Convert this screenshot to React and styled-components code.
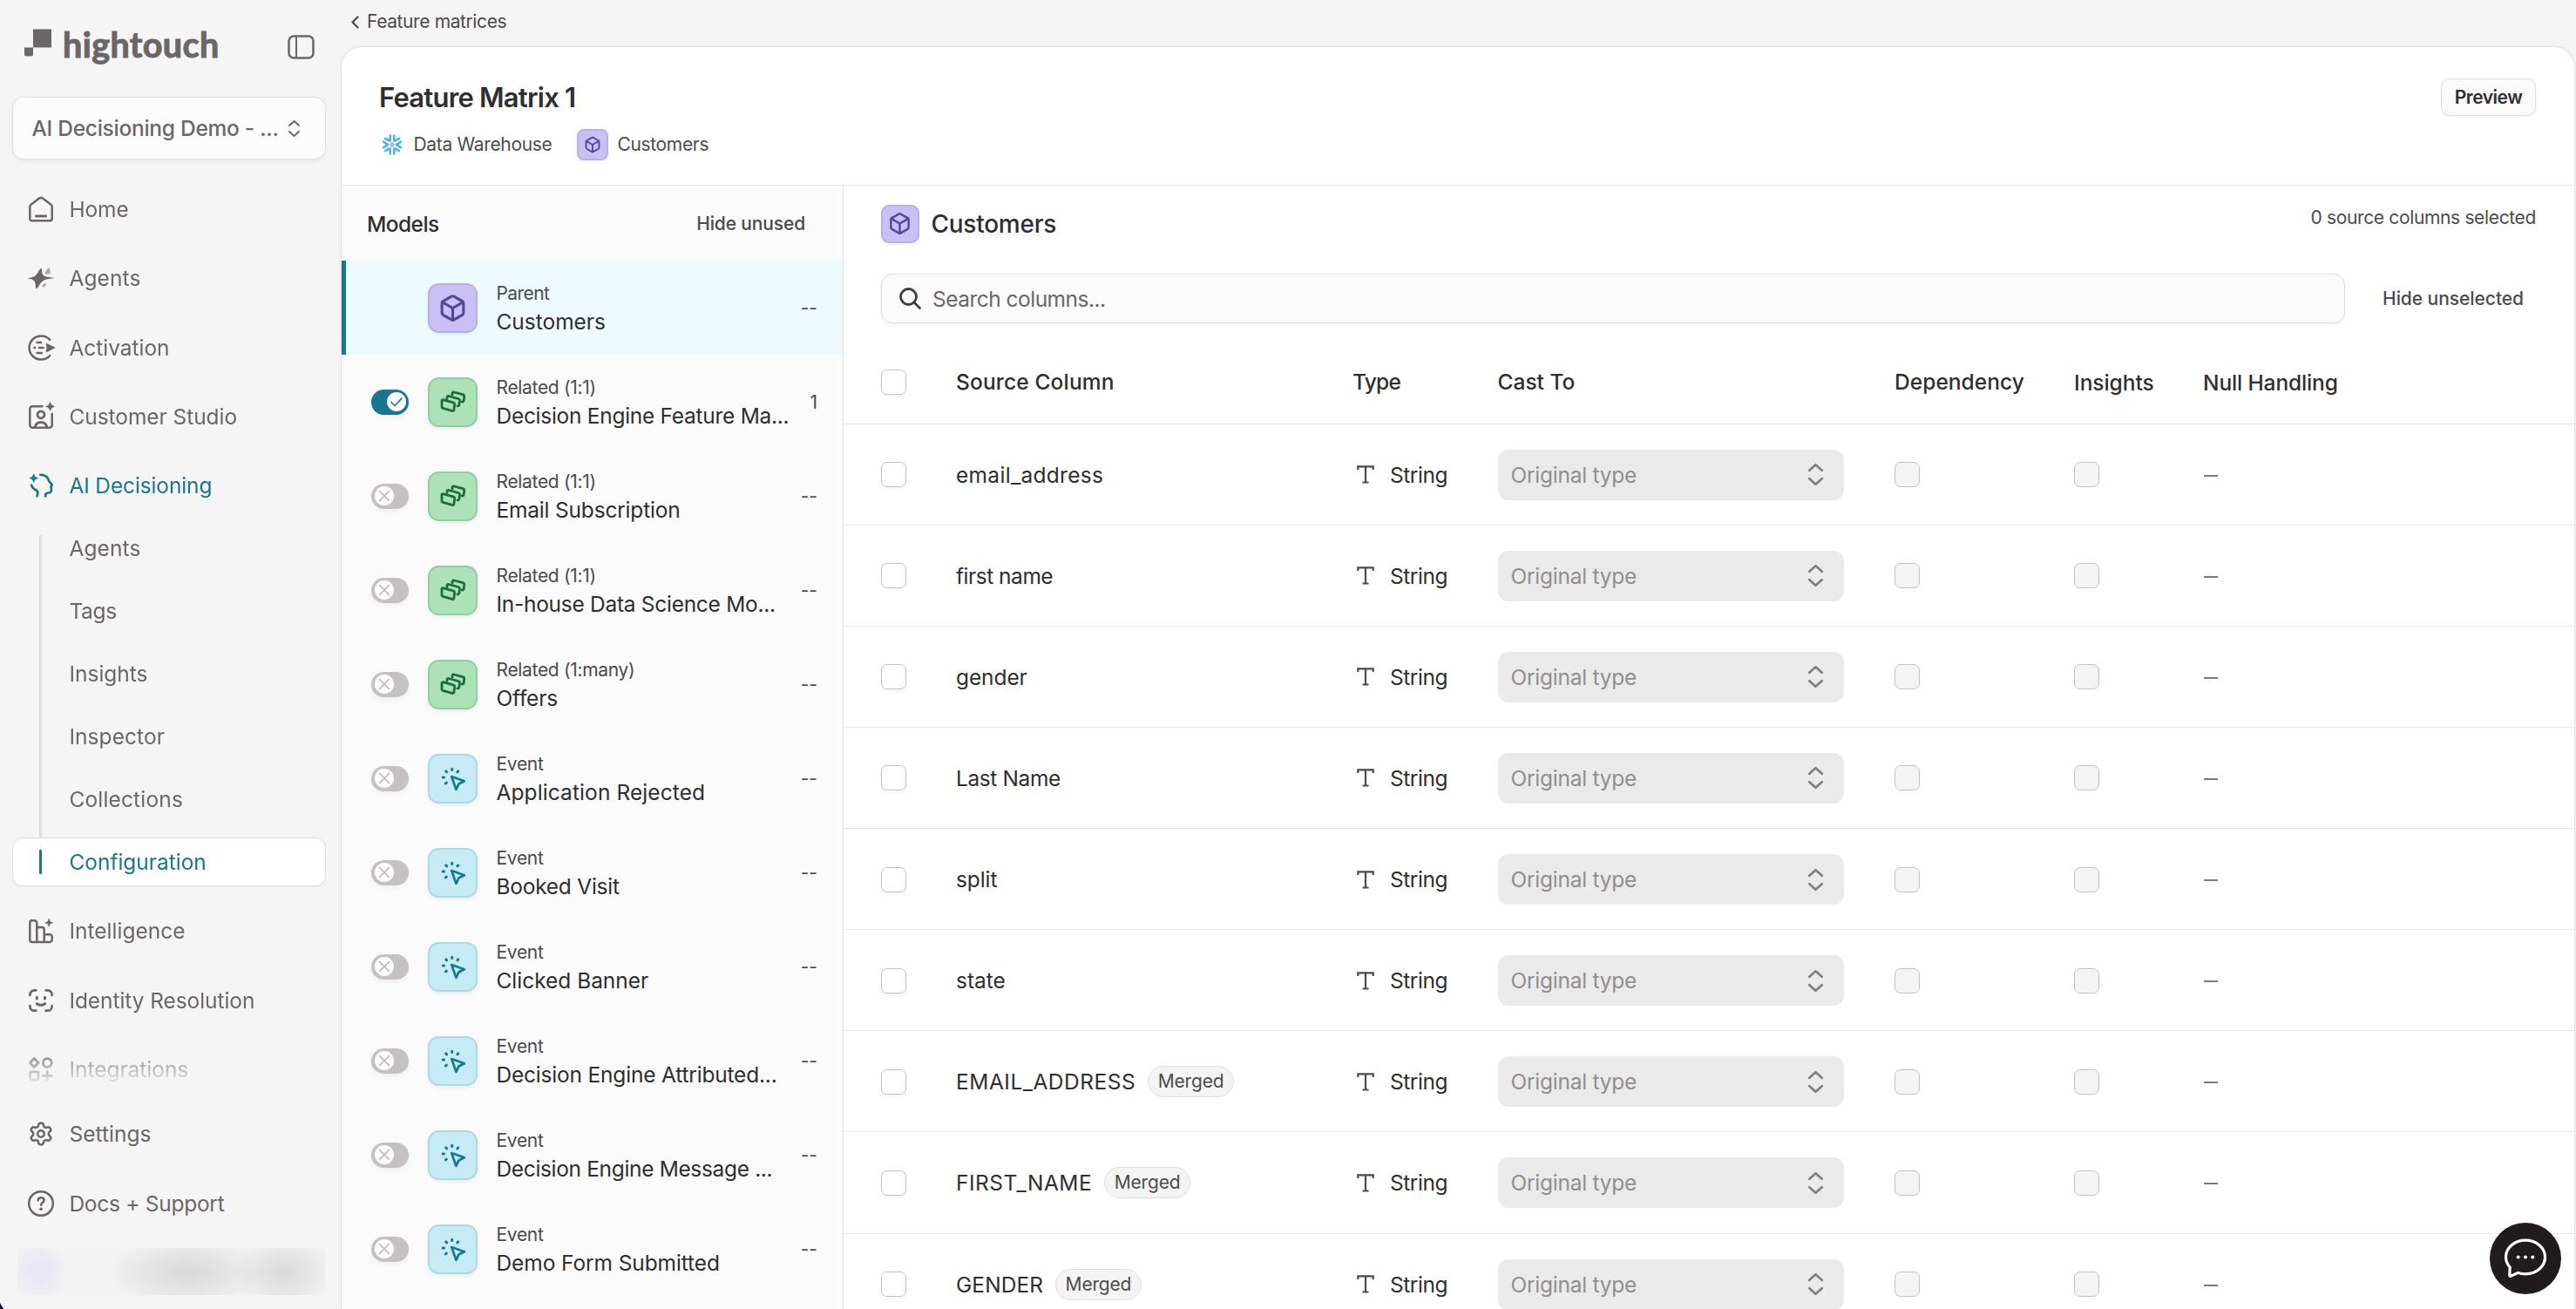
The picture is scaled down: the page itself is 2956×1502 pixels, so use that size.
import React from "react";
import styled, { createGlobalStyle, css } from "styled-components";
import { Box, Settings } from "lucide-react";

const c = {
  page: "#f5f5f5",
  nav: "#6b6667",
  ink: "#2f2e30",
  body: "#4c4a4b",
  line: "#e6e6e6",
  teal: "#19768e",
};

const Global = createGlobalStyle`
  *, *::before, *::after { box-sizing: border-box; }
  body { margin: 0; background: ${c.page}; font-family: Inter, "Liberation Sans", sans-serif; color: ${c.ink}; }
`;

const Text = styled.span`
  font-size: ${(p) => p.$size || 24.5}px;
  font-weight: ${(p) => p.$weight || 400};
  letter-spacing: ${(p) => p.$track || 0}em;
  line-height: ${(p) => p.$lh || 30}px;
  color: ${(p) => p.$color || c.ink};
  white-space: nowrap;
`;

const Shell = styled.div`
  position: relative;
  display: grid;
  grid-template-columns: 391px 1fr;
  height: 1502px;
  overflow: hidden;
  background: ${c.page};
`;

/* ---------- Sidebar ---------- */

const Sidebar = styled.aside`
  display: flex;
  flex-direction: column;
  height: 1502px;
  padding: 0 17px 0 14px;
`;

const Brand = styled.div`
  display: flex;
  align-items: flex-start;
  justify-content: space-between;
  height: 111px;
  padding: 28px 13px 0 14px;
`;

const Wordmark = styled.div`
  display: flex;
  gap: 13px;
  svg { margin-top: 5px; }
`;

const BrandName = styled.span`
  font-family: Lato, sans-serif;
  font-weight: 700;
  font-size: 39.5px;
  line-height: 45px;
  letter-spacing: 0.0104em;
  color: ${c.nav};
  -webkit-text-stroke: 1px ${c.nav};
`;

const CollapseButton = styled.div`
  margin-top: 12px;
  height: 30px;
`;

const Workspace = styled.div`
  display: flex;
  align-items: center;
  justify-content: space-between;
  height: 72px;
  padding: 0 29px 0 21.5px;
  background: #fcfcfc;
  border: 1px solid #e0dfe0;
  border-radius: 13px;
  box-shadow: 0 2px 4px rgba(0, 0, 0, 0.05);
`;

const Nav = styled.nav`
  display: flex;
  flex-direction: column;
  gap: 7.3px;
  height: 1061px;
  margin-top: 21px;
  overflow: hidden;
  mask-image: linear-gradient(to bottom, #000 991px, transparent 1045px);
`;

const FootNav = styled.div`
  display: flex;
  flex-direction: column;
  gap: 8.3px;
`;

const NavItem = styled.div`
  display: flex;
  flex: none;
  align-items: center;
  gap: 17.4px;
  height: 72px;
  padding-left: 18px;
  color: ${(p) => (p.$active ? c.teal : c.nav)};
`;

const SubNav = styled.div`
  display: flex;
  flex: none;
  flex-direction: column;
  margin-top: -7.3px;
`;

const SubItem = styled.div`
  display: flex;
  align-items: center;
  gap: 31.4px;
  height: 72px;
  padding-left: 31px;
  ${(p) =>
    p.$active &&
    css`
      height: 56px;
      margin: 8px 0;
      padding-left: 30px;
      background: #fff;
      border: 1px solid #e0dfe0;
      border-radius: 12px;
      box-shadow: 0 1px 2px rgba(0, 0, 0, 0.05);
    `}
`;

const Rail = styled.i`
  align-self: stretch;
  width: 3px;
  background: #dedede;
  ${(p) => p.$first && css`margin-top: 21px;`}
  ${(p) => p.$last && css`margin-bottom: -8px;`}
  ${(p) =>
    p.$active &&
    css`
      margin: 13px 0;
      background: ${c.teal};
      border-radius: 1px;
    `}
`;

const BlurredAccount = styled.div`
  width: 354px;
  height: 54px;
  margin: 15px 0 0 6px;
  background:
    radial-gradient(ellipse 34px 38px at 25px 26px, #e8e6f6 20%, rgba(232, 230, 246, 0) 100%),
    radial-gradient(ellipse 90px 44px at 195px 28px, #d8d8d8, rgba(217, 217, 217, 0) 100%),
    radial-gradient(ellipse 58px 44px at 305px 28px, #d9d9d9, rgba(218, 218, 218, 0) 100%),
    #f2f2f2;
`;

/* ---------- Main card ---------- */

const Main = styled.main`
  display: flex;
  flex-direction: column;
  height: 1502px;
  padding-right: 1px;
`;

const Breadcrumb = styled.div`
  display: flex;
  align-items: center;
  gap: 9px;
  height: 53px;
  padding: 0 0 3px 12px;
`;

const Card = styled.section`
  display: flex;
  flex: 1;
  flex-direction: column;
  min-height: 0;
  background: #fff;
  border: 1px solid #e3e3e3;
  border-bottom: 0;
  border-radius: 24px 24px 0 0;
  box-shadow: 0 0 4px rgba(0, 0, 0, 0.04);
  overflow: hidden;
`;

const CardHeader = styled.header`
  display: flex;
  justify-content: space-between;
  height: 159px;
  padding: 36px 44px 0 43px;
  border-bottom: 1px solid ${c.line};
`;

const Heading = styled.div`
  display: flex;
  flex-direction: column;
  gap: 15px;
  padding-top: 2px;
`;

const MetaRow = styled.div`
  display: flex;
  align-items: center;
  height: 38px;
  gap: 29px;
  padding-left: 2.5px;
`;

const Meta = styled.div`
  display: flex;
  align-items: center;
  gap: ${(p) => p.$gap}px;
`;

const OutlineButton = styled.div`
  display: flex;
  align-items: center;
  justify-content: center;
  width: 109px;
  height: 43px;
  background: #fafafa;
  border: 1px solid #dededf;
  border-radius: 10px;
  box-shadow: 0 2px 3px rgba(0, 0, 0, 0.04);
`;

const Body = styled.div`
  display: grid;
  flex: 1;
  grid-template-columns: 576px 1fr;
  min-height: 0;
`;

/* ---------- Models ---------- */

const Models = styled.div`
  background: #fafafa;
  border-right: 1px solid #e0e0e0;
`;

const ModelsHeader = styled.div`
  display: flex;
  align-items: center;
  justify-content: space-between;
  height: 86px;
  padding: 1px 43px 0 29px;
`;

const ModelRow = styled.div`
  display: flex;
  align-items: center;
  height: 108px;
  padding: 0 29px 0 29px;
  border-left: 5px solid ${(p) => (p.$selected ? c.teal : "transparent")};
  background: ${(p) => (p.$selected ? "#edfbff" : "transparent")};
`;

const ToggleSlot = styled.div`
  width: 65px;
`;

const Toggle = styled.div`
  display: flex;
  align-items: center;
  justify-content: ${(p) => (p.$on ? "flex-end" : "flex-start")};
  width: 43px;
  height: 29px;
  padding: 0 3.5px;
  border-radius: 15px;
  background: ${(p) => (p.$on ? c.teal : "#c5c0c2")};
  box-shadow: 0 3px 6px rgba(0, 0, 0, 0.04);
`;

const tones = {
  purple: ["#c9c1f4", "#b9afe9", "#54489c"],
  green: ["#ade1b7", "#92cfa0", "#1c6b41"],
  blue: ["#c7ebf4", "#abd9e5", "#17788f"],
};

const Tile = styled.div`
  display: flex;
  flex: none;
  align-items: center;
  justify-content: center;
  width: ${(p) => p.$size}px;
  height: ${(p) => p.$size}px;
  border-radius: ${(p) => p.$size * 0.22}px;
  background: ${(p) => tones[p.$tone][0]};
  border: 2px solid ${(p) => tones[p.$tone][1]};
  color: ${(p) => tones[p.$tone][2]};
  box-shadow: 0 2px 4px rgba(0, 0, 0, 0.06);
`;

const ModelText = styled.div`
  display: flex;
  flex: 1;
  flex-direction: column;
  padding-left: 21.5px;
`;

const Count = styled(Text)`
  padding-top: 2px;
`;

/* ---------- Columns ---------- */

const Columns = styled.div`
  display: flex;
  flex-direction: column;
  min-width: 0;
`;

const ColumnsHeader = styled.div`
  display: flex;
  align-items: flex-start;
  justify-content: space-between;
  height: 101px;
  padding: 22px 44px 0 43px;
`;

const SearchRow = styled.div`
  display: flex;
  align-items: center;
  gap: 43.5px;
  padding: 0 58px 0 43px;
`;

const Search = styled.div`
  display: flex;
  flex: 1;
  align-items: center;
  gap: 13px;
  height: 57px;
  padding-left: 20px;
  background: #fafafa;
  border: 1px solid #dddddd;
  border-radius: 13px;
  box-shadow: 0 2px 4px rgba(0, 0, 0, 0.05);
`;

const gridCols = css`
  display: grid;
  flex: none;
  grid-template-columns: 86px 455px 166.5px 455.5px 206px 148px 1fr;
  align-items: center;
  padding-left: 43px;
  border-bottom: 1px solid #e9e9e9;
`;

const TableHead = styled.div`
  ${gridCols}
  height: 94.5px;
  margin-top: 21px;
`;

const HeadText = styled(Text)`
  padding-${(p) => (p.$low ? "top" : "bottom")}: 1px;
`;

const TableRow = styled.div`
  ${gridCols}
  height: 116.14px;
  padding-top: 1px;
`;

const Cell = styled.div`
  display: flex;
  align-items: center;
  gap: ${(p) => p.$gap || 0}px;
  padding-left: ${(p) => p.$pad || 0}px;
`;

const Checkbox = styled.div`
  width: 29px;
  height: 29px;
  border-radius: 7px;
  border: 1.5px solid #c4c1c3;
  background: ${(p) => (p.$disabled ? "#f4f4f4" : "#fff")};
  box-shadow: ${(p) => (p.$disabled ? "none" : "0 2px 4px rgba(0,0,0,.05)")};
`;

const CastSelect = styled.div`
  display: flex;
  align-items: center;
  justify-content: space-between;
  width: 397px;
  height: 58px;
  padding: 0 24px 0 15px;
  border-radius: 12px;
  background: #eaeaea;
`;

const Pill = styled.span`
  display: flex;
  align-items: center;
  height: 36px;
  padding: 0 10.5px;
  border: 1px solid #dfdfdf;
  border-radius: 18px;
  background: #f4f4f4;
`;

const Dash = styled.i`
  width: 16px;
  height: 2px;
  margin: 2px 0 0 1px;
  background: #7d7a7b;
`;

const Chat = styled.div`
  position: absolute;
  right: 17px;
  bottom: 17px;
  display: flex;
  align-items: center;
  justify-content: center;
  width: 82px;
  height: 82px;
  border-radius: 50%;
  background: #201c1e;
`;

const Corner = styled.div`
  position: absolute;
  left: 0;
  bottom: 0;
  width: 4px;
  height: 7px;
  background: #1d0b22;
  clip-path: polygon(0 0, 100% 100%, 0 100%);
`;

/* ---------- Icons ---------- */

const Svg = ({ w = 30, h = w, sw = 2.5, children }) => (
  <svg width={w} height={h} viewBox={`0 0 ${w} ${h}`} fill="none" stroke="currentColor" strokeWidth={sw} strokeLinecap="round" strokeLinejoin="round" overflow="visible">
    {children}
  </svg>
);

const Sparkle = ({ x, y, r = 4.6 }) => (
  <path
    transform={`translate(${x} ${y}) scale(${r})`}
    d="M0-1C.12-.35.35-.12 1 0 .35.12.12.35 0 1-.12.35-.35.12-1 0-.35-.12-.12-.35 0-1z"
    fill="currentColor"
    strokeWidth={0.22}
  />
);

const HomeIcon = () => (
  <Svg>
    <path d="M2.3 12.6c0-1.3.5-2.2 1.5-3L13 2.6c1.2-.9 2.8-.9 4 0l9.2 7c1 .8 1.5 1.7 1.5 3v13.4c0 1.4-.9 2.3-2.3 2.3H4.6c-1.4 0-2.3-.9-2.3-2.3z" />
    <path d="M9.300 23h11.400" strokeWidth="2.8" />
  </Svg>
);

const AgentsIcon = () => (
  <Svg>
    <path stroke="none" fill="currentColor" d="M0 15c5-.5 8-1.5 9.500-3.500 2-2.500 3-5.500 5-7.300 1-.6 1.500.1 1.500 1.300 0 3.500.5 6 3 7.300 3 1.200 7.500 1.700 12 2.200-4.500.8-9 1-12.500 2.500-3 1.500-4.500 4.500-6.700 8-1.300 2-3 1.700-3 -.1.2-3.400-.3-6.400-2.800-8.100C4 16.200 2 16 0 15.600z" />
    <path stroke="none" fill="currentColor" opacity=".55" d="M24.6 3c-3 1.800-5 4.500-5 7.600h4.900c1.200 0 1.500-.8 1.300-2zM17 25.500c-1-.6-.7-4 4-4.300 1 1-1.500 4.500-4 4.300z" />
  </Svg>
);

const ActivationIcon = () => (
  <Svg>
    <path d="M25.2 5.8A13.6 13.6 0 1 0 25.2 24.2" />
    <path d="M10.500 9h4.500M7.500 15h.6M13 15h4.500M10.500 21h5.500" strokeWidth="2.6" />
    <path d="M21.5 10.8l8.500 4.200-8.500 4.200 1-4.200z" fill="currentColor" strokeWidth="1.8" />
  </Svg>
);

const StudioIcon = () => (
  <Svg>
    <path d="M16.5 3.2H5.300a3 3 0 0 0-3 3v18.600a3 3 0 0 0 3 3h19.400a3 3 0 0 0 3-3V12" />
    <circle cx="15" cy="12.8" r="4" strokeWidth="2.8" />
    <path d="M8.300 27c.7-3.500 3.200-5.500 6.700-5.500s6 2 6.700 5.500" strokeWidth="2.8" />
    <Sparkle x={25.6} y={3.4} />
  </Svg>
);

const DecisionIcon = () => (
  <Svg sw={2.7}>
    <path d="M14.2 2.8c4.800-.2 8.300 2 9.600 5.800.3 1.400 1 2.600 2.200 3.600l1.800 2.100-1.300 2.200.4 3.300c.2 2.200-1 3.500-3.300 3.700-2.200.2-3.400 1-3.400 2.500v1.500" />
    <path d="M4 14.700c.6 2 1.600 3.200 3.200 4.400 1.600 1.100 3.600 1.800 4.100 3.100.4 1.500-.5 3.300-.8 5.300" />
    <Sparkle x={6.7} y={6.6} />
  </Svg>
);

const IntelligenceIcon = () => (
  <Svg>
    <path d="M2.300 25.500V5.800a2.500 2.500 0 0 1 2.500-2.500h3a2.500 2.500 0 0 1 2.500 2.500v22.100H4.800a2.500 2.500 0 0 1-2.500-2.400z" />
    <path d="M10.300 11h5.900a2.500 2.500 0 0 1 2.500 2.500v14.400h-8.400M18.700 19.200h6.500a2.500 2.500 0 0 1 2.500 2.500v3.700a2.500 2.500 0 0 1-2.500 2.500h-6.500" />
    <Sparkle x={24.2} y={5.8} r={4.3} />
  </Svg>
);

const IdentityIcon = () => (
  <Svg sw={2.7}>
    <path d="M2.400 9V8.300a5 5 0 0 1 5-5h2M20.600 3.300h2a5 5 0 0 1 5 5V9M27.600 21v.7a5 5 0 0 1-5 5h-2M9.400 26.700h-2a5 5 0 0 1-5-5V21" />
    <path d="M10.300 11.300v1.700M19.500 11.300v1.700M10.300 18.700c2.800 2 6.400 2 9.200 0" strokeWidth="3" />
  </Svg>
);

const IntegrationsIcon = () => (
  <Svg sw={2.8}>
    <path d="M7.300 2.600l4.800 4.900-4.800 4.900-4.800-4.900z" />
    <circle cx="22.3" cy="7.5" r="4.9" />
    <rect x="2.7" y="17.8" width="9.3" height="9.3" rx="2" />
    <path d="M22.300 17.500v10M17.300 22.500h10" />
  </Svg>
);

const HelpIcon = () => (
  <Svg>
    <circle cx="15" cy="15" r="13.8" />
    <path d="M11.6 11.400c.2-1.900 1.600-3.100 3.500-3.100s3.500 1.200 3.500 3c0 2.600-3.500 2.700-3.500 5.400" />
    <circle cx="15" cy="21.2" r="1.8" stroke="none" fill="currentColor" />
  </Svg>
);

const SettingsIcon = () => <Settings size={30} strokeWidth={2} />;

const UpDown = ({ w = 13, h = 19, sw = 2, color = c.nav }) => (
  <svg width={w} height={h} viewBox={`0 0 ${w} ${h}`} fill="none" stroke={color} strokeWidth={sw} strokeLinecap="round" strokeLinejoin="round">
    <path d={`M${sw / 2} ${w * 0.46}L${w / 2} ${sw / 2}L${w - sw / 2} ${w * 0.46}M${sw / 2} ${h - w * 0.46}L${w / 2} ${h - sw / 2}L${w - sw / 2} ${h - w * 0.46}`} />
  </svg>
);

const SnowflakeLogo = () => (
  <svg width="24" height="24" viewBox="-12 -12 24 24" fill="none" stroke="#56b3e6" strokeWidth="2.7" strokeLinecap="round" strokeLinejoin="round">
    {[0, 60, 120, 180, 240, 300].map((a) => (
      <path key={a} transform={`rotate(${a})`} d="M10 -3.3L4.900 0L10 3.3" />
    ))}
    <rect x="-1.4" y="-1.4" width="2.8" height="2.8" strokeWidth="1.4" transform="rotate(45)" />
  </svg>
);

const RelatedIcon = () => (
  <Svg w={29} h={26} sw={2.8}>
    <path d="M2 12.300q0-2 2-1.500l10.800 3q2 .5 1.800 2.500l-.6 5.600q-.2 2-2.200 1.500l-9.800-2.700q-2-.5-2-2.500z" />
    <path d="M8 9.500V8q0-2 2-1.500l10.800 3q1.900.5 1.700 2.500l-.6 4.400q-.3 1.800-2 1.400" />
    <path d="M14 5V3.500q0-2 2-1.500l10 2.700q1.900.5 1.700 2.500l-.5 4.400q-.3 1.800-2 1.400" />
  </Svg>
);

const EventIcon = () => (
  <Svg w={28} h={27} sw={2.7}>
    <path d="M12.2 11l14.600 5.300-6.400 3.200-3 6.300z" />
    <path d="M12.7 2.200v1.300M5.800 4.900l.8.900M19.700 4.900l-.8.900M2.200 12h1.300M5.400 19l.9-.9" strokeWidth="3" />
  </Svg>
);

const TypeIcon = () => (
  <svg width="20" height="21" viewBox="0 0 20 21" fill="none" stroke={c.body} strokeWidth="2.2">
    <path d="M1.300 5V1.400H18.700V5M10 1.400V19.500M6.500 19.500H13.500" />
  </svg>
);

const Knob = ({ on }) => (
  <svg width="22" height="22" viewBox="0 0 22 22" fill="none" strokeWidth="1.7" strokeLinecap="round" strokeLinejoin="round">
    <circle cx="11" cy="11" r="11" fill="#fff" />
    {on ? <path d="M4.800 11.500l4.200 4 8-8.500" stroke={c.teal} /> : <path d="M5.500 5.500l11 11M16.500 5.500l-11 11" stroke="#bbb6b8" />}
  </svg>
);

/* ---------- Data ---------- */

const navTop = [
  ["Home", HomeIcon, -0.005],
  ["Agents", AgentsIcon, 0.005],
  ["Activation", ActivationIcon, -0.001],
  ["Customer Studio", StudioIcon, -0.0023],
  ["AI Decisioning", DecisionIcon, -0.0054, true],
];
const subNav = [["Agents", 0.005], ["Tags", -0.012], ["Insights", 0.0], ["Inspector", 0.003], ["Collections", 0.0067], ["Configuration", -0.001]];
const navBottom = [
  ["Intelligence", IntelligenceIcon, 0.001],
  ["Identity Resolution", IdentityIcon, -0.003],
  ["Integrations", IntegrationsIcon, -0.001],
];

const models = [
  { kind: "Parent", name: "Customers", tone: "purple", count: "--", selected: true, track: -0.001, kindTrack: -0.028 },
  { kind: "Related (1:1)", name: "Decision Engine Feature Ma...", tone: "green", count: "1", on: true },
  { kind: "Related (1:1)", name: "Email Subscription", tone: "green", count: "--", track: -0.008 },
  { kind: "Related (1:1)", name: "In-house Data Science Mo...", tone: "green", count: "--" },
  { kind: "Related (1:many)", name: "Offers", tone: "green", count: "--", track: -0.008 },
  { kind: "Event", name: "Application Rejected", tone: "blue", count: "--", track: 0.004 },
  { kind: "Event", name: "Booked Visit", tone: "blue", count: "--", track: -0.01 },
  { kind: "Event", name: "Clicked Banner", tone: "blue", count: "--", track: -0.001 },
  { kind: "Event", name: "Decision Engine Attributed...", tone: "blue", count: "--", track: -0.008 },
  { kind: "Event", name: "Decision Engine Message ...", tone: "blue", count: "--", track: -0.014 },
  { kind: "Event", name: "Demo Form Submitted", tone: "blue", count: "--", track: -0.004 },
];

const columns = [
  ["email_address", 0.0125],
  ["first name", -0.02],
  ["gender", -0.004],
  ["Last Name", -0.016],
  ["split", -0.004],
  ["state", 0],
  ["EMAIL_ADDRESS", 0.0209, true],
  ["FIRST_NAME", 0.0206, true],
  ["GENDER", 0.003, true],
];

const TileIcon = ({ tone }) => {
  if (tone === "purple") return <Box size={33} strokeWidth={2.3} />;
  return tone === "green" ? <RelatedIcon /> : <EventIcon />;
};

const NavLink = ({ item: [label, Icon, track, active] }) => (
  <NavItem $active={active}>
    <Icon />
    <Text $track={track} $color="inherit">{label}</Text>
  </NavItem>
);

export default function App() {
  return (
    <Shell>
      <Global />
      <Sidebar>
        <Brand>
          <Wordmark>
            <svg width="31" height="32" viewBox="0 0 31 32" fill={c.nav}>
              <path d="M10 .5h21v21H10z" />
              <path d="M0 21.500h10v8a2 2 0 0 1-2 2H2a2 2 0 0 1-2-2z" />
            </svg>
            <BrandName>hightouch</BrandName>
          </Wordmark>
          <CollapseButton>
            <svg width="31" height="28" viewBox="0 0 31 28" fill="none" stroke={c.nav}>
              <rect x="1.5" y="1.5" width="28" height="25" rx="5.5" strokeWidth="2.5" />
              <path d="M10 1.500v25" strokeWidth="2" />
            </svg>
          </CollapseButton>
        </Brand>
        <Workspace>
          <Text $weight={500} $track={-0.0108} $color={c.nav}>AI Decisioning Demo - ...</Text>
          <UpDown />
        </Workspace>
        <Nav>
          {navTop.map((n) => <NavLink key={n[0]} item={n} />)}
          <SubNav>
            {subNav.map(([label, track], i) => {
              const active = label === "Configuration";
              return (
                <SubItem key={label} $active={active}>
                  <Rail $first={i === 0} $last={i === 4} $active={active} />
                  <Text $track={track} $color={active ? c.teal : c.nav}>{label}</Text>
                </SubItem>
              );
            })}
          </SubNav>
          {navBottom.map((n) => <NavLink key={n[0]} item={n} />)}
        </Nav>
        <FootNav>
          <NavLink item={["Settings", SettingsIcon, 0.001]} />
          <NavLink item={["Docs + Support", HelpIcon, -0.011]} />
        </FootNav>
        <BlurredAccount />
      </Sidebar>

      <Main>
        <Breadcrumb>
          <Svg w={9} h={15} sw={2.3}><path d="M7.500 1.500L1.500 7.500L7.500 13.500" stroke={c.body} /></Svg>
          <Text $size={21} $track={-0.0188} $color={c.body}>Feature matrices</Text>
        </Breadcrumb>
        <Card>
          <CardHeader>
            <Heading>
              <Text $size={31} $weight={600} $track={-0.0255} $lh={40}>Feature Matrix 1</Text>
              <MetaRow>
                <Meta $gap={13}>
                  <SnowflakeLogo />
                  <Text $size={21} $track={-0.0159} $color={c.body}>Data Warehouse</Text>
                </Meta>
                <Meta $gap={10}>
                  <Tile $size={36} $tone="purple"><Box size={20} strokeWidth={2.3} /></Tile>
                  <Text $size={21} $track={-0.0157} $color={c.body}>Customers</Text>
                </Meta>
              </MetaRow>
            </Heading>
            <OutlineButton>
              <Text $size={21} $weight={600} $track={-0.0228}>Preview</Text>
            </OutlineButton>
          </CardHeader>
          <Body>
            <Models>
              <ModelsHeader>
                <Text $weight={500} $track={-0.0234}>Models</Text>
                <Text $size={21} $weight={500} $track={-0.0066} $color={c.body}>Hide unused</Text>
              </ModelsHeader>
              {models.map((m) => (
                <ModelRow key={m.name} $selected={m.selected}>
                  <ToggleSlot>
                    {!m.selected && <Toggle $on={m.on}><Knob on={m.on} /></Toggle>}
                  </ToggleSlot>
                  <Tile $size={57} $tone={m.tone}><TileIcon tone={m.tone} /></Tile>
                  <ModelText>
                    <Text $size={21} $track={m.kindTrack || -0.0151} $lh={31} $color={c.body}>{m.kind}</Text>
                    <Text $track={m.track || -0.0115} $lh={34}>{m.name}</Text>
                  </ModelText>
                  <Count $size={21} $color={c.body}>{m.count}</Count>
                </ModelRow>
              ))}
            </Models>
            <Columns>
              <ColumnsHeader>
                <Meta $gap={14}>
                  <Tile $size={43.5} $tone="purple"><Box size={27} strokeWidth={2.2} /></Tile>
                  <Text $size={28} $weight={500} $track={-0.009} $lh={40}>Customers</Text>
                </Meta>
                <Text $size={21} $track={-0.0167} $color={c.body}>0 source columns selected</Text>
              </ColumnsHeader>
              <SearchRow>
                <Search>
                  <Svg w={25} h={25} sw={2.8}>
                    <circle cx="10.5" cy="10.5" r="9" stroke="#3f3d3e" />
                    <path d="M17.200 17.200L23.500 23.500" stroke="#3f3d3e" />
                  </Svg>
                  <Text $track={-0.0211} $color={c.nav}>Search columns...</Text>
                </Search>
                <Text $size={21} $weight={500} $track={-0.0026} $color={c.body}>Hide unselected</Text>
              </SearchRow>
              <TableHead>
                <Checkbox />
                <HeadText $weight={500} $track={0.0062}>Source Column</HeadText>
                <HeadText $weight={500} $track={-0.0299}>Type</HeadText>
                <HeadText $weight={500}>Cast To</HeadText>
                <HeadText $weight={500} $track={0.0022}>Dependency</HeadText>
                <HeadText $weight={500} $track={-0.002} $low>Insights</HeadText>
                <HeadText $weight={500} $track={-0.0053} $low>Null Handling</HeadText>
              </TableHead>
              {columns.map(([name, track, merged]) => (
                <TableRow key={name}>
                  <Checkbox />
                  <Cell $gap={14}>
                    <Text $track={track}>{name}</Text>
                    {merged && (
                      <Pill><Text $size={21} $track={-0.0085} $color={c.body}>Merged</Text></Pill>
                    )}
                  </Cell>
                  <Cell $gap={18} $pad={5}>
                    <TypeIcon />
                    <Text $track={-0.018}>String</Text>
                  </Cell>
                  <CastSelect>
                    <Text $track={-0.0104} $color="#918e8f">Original type</Text>
                    <UpDown w={17} h={25} sw={2.6} color="#807d7e" />
                  </CastSelect>
                  <Checkbox $disabled />
                  <Checkbox $disabled />
                  <Dash />
                </TableRow>
              ))}
            </Columns>
          </Body>
        </Card>
      </Main>

      <Chat>
        <svg width="50" height="46" viewBox="0 0 50 46" fill="none" stroke="#fff" strokeWidth="3.2" strokeLinejoin="round">
          <path d="M25 2.200c12.400 0 22.500 8.400 22.500 19.300S37.400 40.800 25 40.800c-3 0-5.900-.5-8.500-1.400L8 43.200c-.8.300-1.200 0-1.200-.9l.4-9.300C4.200 29.800 2.500 25.900 2.500 21.500 2.500 10.600 12.600 2.200 25 2.200z" />
          <g fill="#fff" stroke="none">
            <circle cx="16.7" cy="21.5" r="2" />
            <circle cx="25" cy="21.5" r="2" />
            <circle cx="33.3" cy="21.5" r="2" />
          </g>
        </svg>
      </Chat>
      <Corner />
    </Shell>
  );
}
